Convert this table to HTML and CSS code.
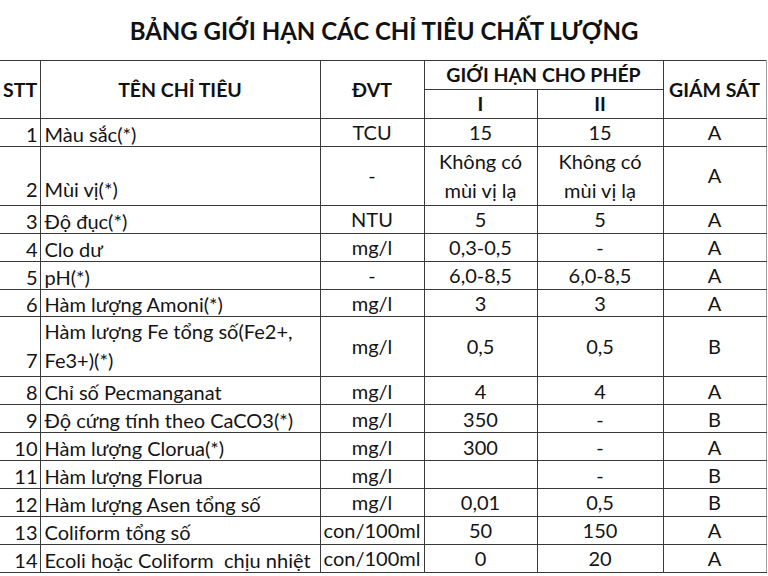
FILE: index.html
```html
<!DOCTYPE html>
<html lang="vi">
<head>
<meta charset="utf-8">
<title>Bảng giới hạn các chỉ tiêu chất lượng</title>
<link rel="stylesheet" href="styles.css">
</head>
<body>
<div class="sheet">
  <h1 class="title">BẢNG GIỚI HẠN CÁC CHỈ TIÊU CHẤT LƯỢNG</h1>
  <table class="grid">
    <colgroup>
      <col class="c-stt"><col class="c-name"><col class="c-unit"><col class="c-l1"><col class="c-l2"><col class="c-mon">
    </colgroup>
    <thead>
      <tr class="h1">
        <th rowspan="2" class="first">STT</th>
        <th rowspan="2">TÊN CHỈ TIÊU</th>
        <th rowspan="2">ĐVT</th>
        <th colspan="2">GIỚI HẠN CHO PHÉP</th>
        <th rowspan="2">GIÁM SÁT</th>
      </tr>
      <tr class="h2">
        <th>I</th>
        <th>II</th>
      </tr>
    </thead>
    <tbody>
      <tr><td class="first num">1</td><td class="name">Màu sắc(*)</td><td>TCU</td><td>15</td><td>15</td><td>A</td></tr>
      <tr class="tall"><td class="first num">2</td><td class="name">Mùi vị(*)</td><td>-</td><td>Không có<br>mùi vị lạ</td><td>Không có<br>mùi vị lạ</td><td>A</td></tr>
      <tr><td class="first num">3</td><td class="name">Độ đục(*)</td><td>NTU</td><td>5</td><td>5</td><td>A</td></tr>
      <tr><td class="first num">4</td><td class="name">Clo dư</td><td>mg/l</td><td>0,3-0,5</td><td>-</td><td>A</td></tr>
      <tr><td class="first num">5</td><td class="name">pH(*)</td><td>-</td><td>6,0-8,5</td><td>6,0-8,5</td><td>A</td></tr>
      <tr><td class="first num">6</td><td class="name">Hàm lượng Amoni(*)</td><td>mg/l</td><td>3</td><td>3</td><td>A</td></tr>
      <tr class="tall"><td class="first num">7</td><td class="name">Hàm lượng Fe tổng số(Fe2+,<br>Fe3+)(*)</td><td>mg/l</td><td>0,5</td><td>0,5</td><td>B</td></tr>
      <tr><td class="first num">8</td><td class="name">Chỉ số Pecmanganat</td><td>mg/l</td><td>4</td><td>4</td><td>A</td></tr>
      <tr><td class="first num">9</td><td class="name">Độ cứng tính theo CaCO3(*)</td><td>mg/l</td><td>350</td><td>-</td><td>B</td></tr>
      <tr><td class="first num">10</td><td class="name">Hàm lượng Clorua(*)</td><td>mg/l</td><td>300</td><td>-</td><td>A</td></tr>
      <tr><td class="first num">11</td><td class="name">Hàm lượng Florua</td><td>mg/l</td><td></td><td>-</td><td>B</td></tr>
      <tr><td class="first num">12</td><td class="name">Hàm lượng Asen tổng số</td><td>mg/l</td><td>0,01</td><td>0,5</td><td>B</td></tr>
      <tr><td class="first num">13</td><td class="name">Coliform tổng số</td><td>con/100ml</td><td>50</td><td>150</td><td>A</td></tr>
      <tr><td class="first num">14</td><td class="name">Ecoli hoặc Coliform&nbsp; chịu nhiệt</td><td>con/100ml</td><td>0</td><td>20</td><td>A</td></tr>
    </tbody>
  </table>
</div>
</body>
</html>
```

FILE: styles.css
```css
html, body {
  margin: 0;
  padding: 0;
  background: #ffffff;
}

.sheet {
  width: 768px;
  height: 576px;
  overflow: hidden;
  font-family: Lato, "Liberation Sans", sans-serif;
  color: #141414;
}

.title {
  margin: 0;
  height: 60px;
  line-height: 62px;
  text-align: center;
  font-size: 24px;
  font-weight: 700;
  color: #111111;
}

.grid {
  border-collapse: collapse;
  table-layout: fixed;
  width: 766px;
  font-size: 20px;
}

.c-stt { width: 40px; }
.c-name { width: 280px; }
.c-unit { width: 104px; }
.c-l1 { width: 113px; }
.c-l2 { width: 126px; }
.c-mon { width: 103px; }

.grid th,
.grid td {
  border: 1.5px solid #3a3a3a;
  padding: 0 3px;
  text-align: center;
  vertical-align: middle;
  line-height: 22px;
  white-space: nowrap;
  overflow: hidden;
}

.grid th {
  font-weight: 700;
  font-size: 19.5px;
  color: #111111;
}

.grid .first {
  border-left: none;
}

.grid tr > :last-child {
  border-right-color: #a0a0a0;
}

.h1, .h2 {
  height: 29px;
}

.grid tbody tr {
  height: 27.9px;
}

.grid tbody tr.tall {
  height: 57.2px;
}

.grid td.num {
  text-align: right;
  vertical-align: bottom;
  padding-right: 2px;
  padding-bottom: 1px;
}

.grid td.name {
  text-align: left;
  vertical-align: bottom;
  padding-left: 4px;
  padding-bottom: 1px;
}

.tall td {
  line-height: 29px;
}
```
